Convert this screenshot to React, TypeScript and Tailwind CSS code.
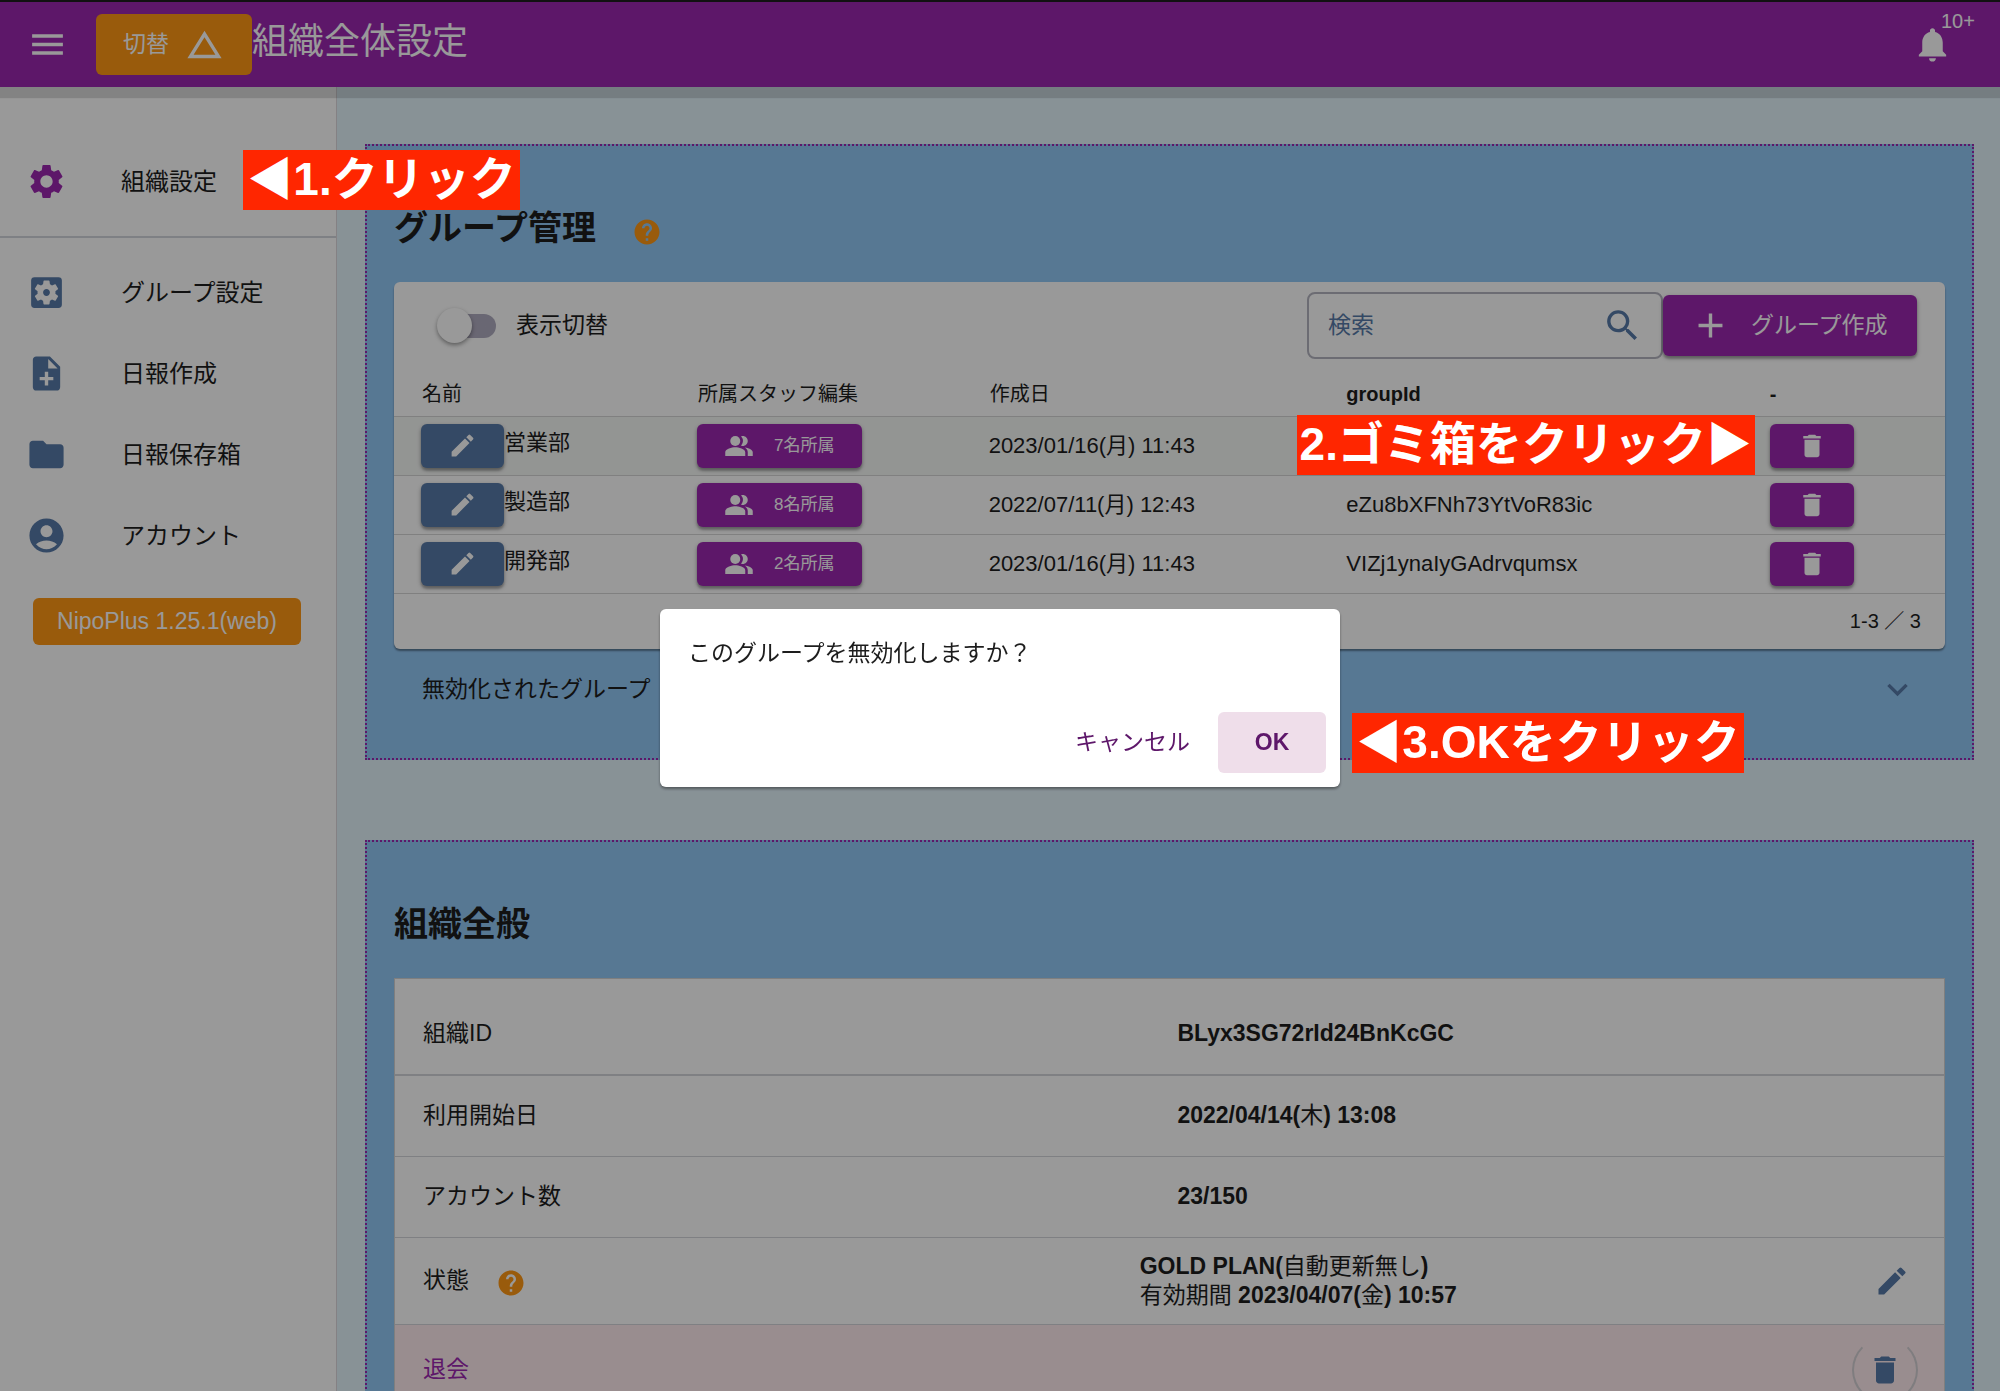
import React from "react";
import type { ReactNode } from "react";
import type { IconType } from "react-icons";
import {
  MdAccountCircle,
  MdAdd,
  MdChangeHistory,
  MdDelete,
  MdEdit,
  MdExpandMore,
  MdFolder,
  MdHelp,
  MdMenu,
  MdNoteAdd,
  MdNotifications,
  MdPeopleAlt,
  MdSearch,
  MdSettings,
  MdSettingsApplications,
} from "react-icons/md";

const raised = "shadow-[0_2px_4px_rgba(0,0,0,0.35),0_3px_2px_rgba(0,0,0,0.14)]";

const menu: { label: string; icon: IconType }[] = [
  { label: "グループ設定", icon: MdSettingsApplications },
  { label: "日報作成", icon: MdNoteAdd },
  { label: "日報保存箱", icon: MdFolder },
  { label: "アカウント", icon: MdAccountCircle },
];

const groups = [
  { name: "営業部", staff: "7名所属", created: "2023/01/16(月) 11:43", id: "" },
  { name: "製造部", staff: "8名所属", created: "2022/07/11(月) 12:43", id: "eZu8bXFNh73YtVoR83ic" },
  { name: "開発部", staff: "2名所属", created: "2023/01/16(月) 11:43", id: "VIZj1ynaIyGAdrvqumsx" },
];

const facts = [
  { label: "組織ID", value: "BLyx3SG72rId24BnKcGC" },
  { label: "利用開始日", value: "2022/04/14(木) 13:08" },
  { label: "アカウント数", value: "23/150" },
];

/* Latin letters and digits in bold, Japanese characters in the regular weight. */
function Strong({ text }: { text: string }) {
  return (
    <span className="font-bold">
      {text.split(/([\u3040-\u30ff\u4e00-\u9fff]+)/).map((part, i) =>
        i % 2 ? (
          <span key={i} className="font-normal">
            {part}
          </span>
        ) : (
          part
        ),
      )}
    </span>
  );
}

function Callout({ className, children }: { className: string; children: ReactNode }) {
  return (
    <div
      className={`absolute z-50 flex h-[60px] items-center justify-center whitespace-nowrap bg-[#ff2600] pb-[2px] text-[46px] font-bold leading-[58px] text-white ${className}`}
    >
      {children}
    </div>
  );
}

function Header() {
  return (
    <header className="relative z-10 flex h-[87px] shrink-0 items-center border-t-2 border-[#1d1d1d] bg-[#9c27b0] text-white shadow-[0_11px_1px_rgba(0,0,0,0.14)]">
      <button type="button" aria-label="メニュー" className="ml-[27px]">
        <MdMenu className="size-[41px]" />
      </button>
      <button
        type="button"
        className="ml-7 flex h-[61px] w-[156px] items-center justify-center gap-[15px] rounded-md bg-[#ff9814] text-[23px]"
      >
        切替
        <MdChangeHistory className="size-[41px]" />
      </button>
      <h1 className="pb-[6px] text-[36px] font-normal leading-[48px]">組織全体設定</h1>
      <button type="button" aria-label="通知" className="relative ml-auto mr-[47px]">
        <MdNotifications className="size-[41px]" />
        <span className="absolute -top-[15px] left-[29px] text-[20px] leading-6">10+</span>
      </button>
    </header>
  );
}

function Sidebar() {
  return (
    <nav className="w-[337px] shrink-0 border-r border-[#dcd8dc] bg-white text-[24px]">
      <div className="border-b-2 border-[#d2d6dc] pt-[54px] pb-[14px]">
        <a href="#org" className="relative flex h-[81px] items-center pl-[26px]">
          <MdSettings className="size-[41px] text-[#9c27b0]" />
          <span className="ml-[54px]">組織設定</span>
          <Callout className="top-[9px] left-[243px] w-[277px]">◀1.クリック</Callout>
        </a>
      </div>
      <ul className="pt-[14px]">
        {menu.map(({ label, icon: Icon }) => (
          <li key={label}>
            <a href="#menu" className="flex h-[81px] items-center pl-[26px]">
              <Icon className="size-[41px] text-[#577aa8]" />
              <span className="ml-[54px]">{label}</span>
            </a>
          </li>
        ))}
      </ul>
      <button
        type="button"
        className="ml-[33px] mt-[22px] h-[47px] w-[268px] rounded-md bg-[#ff9814] text-[23px] text-white"
      >
        NipoPlus 1.25.1(web)
      </button>
    </nav>
  );
}

function Section({ title, help, children }: { title: string; help?: boolean; children: ReactNode }) {
  return (
    <section className="border-2 border-dotted border-[#9c27b0] bg-[#92c8f6] px-[27px] pt-7 pb-[27px]">
      <div className="flex h-[108px] items-center">
        <h2 className="text-[34px] font-bold leading-[48px]">{title}</h2>
        {help && <MdHelp className="ml-9 mt-2 size-[30px] text-[#ff9814]" />}
      </div>
      {children}
    </section>
  );
}

function GroupTable() {
  return (
    <div className="rounded-md bg-white shadow-[0_2px_2px_rgba(0,0,0,0.4)]">
      <div className="flex items-center pt-[10px] pr-7 pb-[13px] pl-[43px]">
        <label className="flex items-center text-[23px]">
          <input type="checkbox" className="peer sr-only" />
          <span className="flex h-6 w-[59px] items-center rounded-full bg-linear-to-r from-transparent from-30% to-[#b0acc0] to-30%">
            <span className="size-[35px] rounded-full bg-white shadow-[0_2px_4px_rgba(0,0,0,0.4)]" />
          </span>
          <span className="ml-5">表示切替</span>
        </label>
        <label className="ml-auto flex h-[67px] w-[356px] items-center rounded-lg border-2 border-[#b4b4c0] pl-[19px] pr-[18px]">
          <input
            type="search"
            aria-label="検索"
            placeholder="検索"
            className="min-w-0 flex-1 text-[23px] outline-none placeholder:text-[#577aa8]"
          />
          <MdSearch className="size-[41px] text-[#577aa8]" />
        </label>
        <button
          type="button"
          className={`flex h-[61px] w-[254px] items-center rounded-md bg-[#9c27b0] pl-[27px] text-[23px] text-white ${raised}`}
        >
          <MdAdd className="mr-5 size-[41px]" />
          グループ作成
        </button>
      </div>
      <table className="w-full table-fixed text-left">
        <colgroup>
          <col className="w-[17.8%]" />
          <col className="w-[18.8%]" />
          <col className="w-[23%]" />
          <col className="w-[27.3%]" />
          <col className="w-[13.1%]" />
        </colgroup>
        <thead>
          <tr className="h-[44px] border-b border-[#d6d6d6] text-[20px]">
            <th className="pl-7 font-normal">名前</th>
            <th className="pl-7 font-normal">所属スタッフ編集</th>
            <th className="pl-7 font-normal">作成日</th>
            <th className="pl-7 font-bold">groupId</th>
            <th className="pl-7 font-bold">-</th>
          </tr>
        </thead>
        <tbody>
          {groups.map((g, i) => (
            <tr
              key={g.name}
              className="h-[59px] border-b border-[#d6d6d6] text-[22px] first:bg-[#f6f8f6]"
            >
              <td className="pl-[27px]">
                <div className="flex">
                  <button
                    type="button"
                    aria-label={`${g.name}を編集`}
                    className={`flex h-11 w-[83px] items-center justify-center rounded-md bg-[#577aa8] text-white ${raised}`}
                  >
                    <MdEdit className="size-[29px]" />
                  </button>
                  <span className="leading-[38px]">{g.name}</span>
                </div>
              </td>
              <td className="pl-[27px]">
                <button
                  type="button"
                  className={`flex h-11 w-[165px] items-center rounded-md bg-[#9c27b0] pl-[27px] text-[17px] text-white ${raised}`}
                >
                  <MdPeopleAlt className="mr-5 size-[30px]" />
                  {g.staff}
                </button>
              </td>
              <td className="pl-[27px]">{g.created}</td>
              <td className="relative pl-7">
                {g.id}
                {i === 0 && <Callout className="-top-[2px] -right-[13px] w-[458px]">2.ゴミ箱をクリック▶</Callout>}
              </td>
              <td className="pl-7">
                <button
                  type="button"
                  aria-label={`${g.name}を無効化`}
                  className={`flex h-11 w-[84px] items-center justify-center rounded-md bg-[#9c27b0] text-white ${raised}`}
                >
                  <MdDelete className="size-[30px]" />
                </button>
              </td>
            </tr>
          ))}
        </tbody>
      </table>
      <div className="flex h-[55px] items-center justify-end pr-6 text-[20px]">1-3 ／ 3</div>
    </div>
  );
}

function Organization() {
  return (
    <dl className="border border-[#d4d4d4] bg-white pt-[15px] text-[23px]">
      {facts.map((f) => (
        <div
          key={f.label}
          className="flex h-[81px] items-center border-b border-[#d4d6da] pl-7 first:h-[82px] first:border-b-2"
        >
          <dt className="w-[49.6%]">{f.label}</dt>
          <dd>
            <Strong text={f.value} />
          </dd>
        </div>
      ))}
      <div className="flex h-[87px] items-center border-b border-[#d4d6da] pr-[34px] pl-7">
        <dt className="flex w-[48.2%] items-center">
          状態
          <MdHelp className="ml-[27px] mt-1 size-[30px] text-[#ff9814]" />
        </dt>
        <dd className="leading-[29px]">
          <Strong text="GOLD PLAN(自動更新無し)" />
          <br />
          <Strong text="有効期間 2023/04/07(金) 10:57" />
        </dd>
        <dd className="ml-auto flex">
          <button type="button" aria-label="プランを編集">
            <MdEdit className="size-9 text-[#577aa8]" />
          </button>
        </dd>
      </div>
      <div className="flex h-[90px] items-center bg-[#ffebee] pr-[26px] pl-7">
        <dt className="text-[#9c27b0]">退会</dt>
        <dd className="ml-auto">
          <button
            type="button"
            aria-label="退会する"
            className="flex size-[66px] items-center justify-center rounded-full border-2 border-[#d4d0d4] border-t-transparent"
          >
            <MdDelete className="size-9 text-[#577aa8]" />
          </button>
        </dd>
      </div>
    </dl>
  );
}

function ConfirmDialog() {
  return (
    <div className="fixed inset-0 z-40 flex items-center justify-center bg-black/40 pt-[5px]">
      <div
        role="dialog"
        aria-modal="true"
        className="relative w-[680px] rounded-md bg-white px-[14px] pt-[27px] pb-[14px] text-[23px] shadow-[0_2px_3px_rgba(0,0,0,0.4)]"
      >
        <p className="pl-[14px] leading-[34px]">このグループを無効化しますか？</p>
        <div className="mt-[42px] flex justify-end text-[#5e176a]">
          <button type="button" className="h-[61px] px-7">
            キャンセル
          </button>
          <button type="button" className="h-[61px] w-[108px] rounded-md bg-[#efdeea] font-bold">
            OK
          </button>
        </div>
        <Callout className="bottom-[14px] left-full ml-3 w-[392px]">◀3.OKをクリック</Callout>
      </div>
    </div>
  );
}

export default function App() {
  return (
    <div className="flex h-screen flex-col overflow-hidden font-['Liberation_Sans','Noto_Sans_CJK_JP',sans-serif] text-[#1d1d1d]">
      <Header />
      <div className="flex min-h-0 flex-1">
        <Sidebar />
        <main className="flex min-w-0 flex-1 flex-col gap-20 overflow-hidden bg-[#e3f3fb] pt-[57px] pr-[26px] pl-7">
          <Section title="グループ管理" help>
            <GroupTable />
            <button type="button" className="flex h-[82px] w-full items-center justify-between pr-[27px] pl-7 text-[23px]">
              無効化されたグループ
              <MdExpandMore className="size-[41px] text-[#577aa8]" />
            </button>
          </Section>
          <Section title="組織全般">
            <Organization />
          </Section>
        </main>
      </div>
      <ConfirmDialog />
    </div>
  );
}
